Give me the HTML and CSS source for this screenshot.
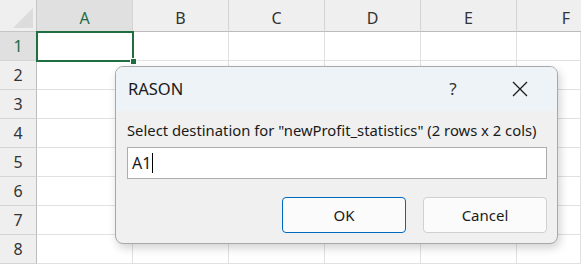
FILE: index.html
```html
<!DOCTYPE html>
<html lang="en">
  <head>
    <meta charset="UTF-8" />
    <title>RASON</title>
    <link rel="stylesheet" href="styles.css">
  </head>
  <body>
    <div class="sheet">
      <div class="corner"><span class="corner-tri"></span></div>
      <div class="col-head active">A</div>
      <div class="col-head">B</div>
      <div class="col-head">C</div>
      <div class="col-head">D</div>
      <div class="col-head">E</div>
      <div class="col-head last">F</div>

      <div class="row-head active">1</div>
      <div class="cell selected"><span class="handle"></span></div>
      <div class="cell"></div><div class="cell"></div><div class="cell"></div><div class="cell"></div><div class="cell"></div>

      <div class="row-head">2</div>
      <div class="cell"></div><div class="cell"></div><div class="cell"></div><div class="cell"></div><div class="cell"></div><div class="cell"></div>
      <div class="row-head">3</div>
      <div class="cell"></div><div class="cell"></div><div class="cell"></div><div class="cell"></div><div class="cell"></div><div class="cell"></div>
      <div class="row-head">4</div>
      <div class="cell"></div><div class="cell"></div><div class="cell"></div><div class="cell"></div><div class="cell"></div><div class="cell"></div>
      <div class="row-head">5</div>
      <div class="cell"></div><div class="cell"></div><div class="cell"></div><div class="cell"></div><div class="cell"></div><div class="cell"></div>
      <div class="row-head">6</div>
      <div class="cell"></div><div class="cell"></div><div class="cell"></div><div class="cell"></div><div class="cell"></div><div class="cell"></div>
      <div class="row-head">7</div>
      <div class="cell"></div><div class="cell"></div><div class="cell"></div><div class="cell"></div><div class="cell"></div><div class="cell"></div>
      <div class="row-head">8</div>
      <div class="cell"></div><div class="cell"></div><div class="cell"></div><div class="cell"></div><div class="cell"></div><div class="cell"></div>
    </div>

    <!-- 對話框 -->
    <div class="dialog">
      <div class="title-bar">
        <span class="title">RASON</span>
        <span class="help">?</span>
        <span class="close">
          <svg width="16" height="16" viewBox="0 0 16 16">
            <path d="M1 1 L15 15 M15 1 L1 15" stroke="#1a1a1a" stroke-width="1.3" fill="none" />
          </svg>
        </span>
      </div>
      <div class="dialog-body">
        <p class="prompt">Select destination for "newProfit_statistics" (2 rows x 2 cols)</p>
        <div class="input">A1<span class="caret"></span></div>
        <div class="buttons">
          <span class="btn primary">OK</span>
          <span class="btn">Cancel</span>
        </div>
      </div>
    </div>
  </body>
</html>
```

FILE: styles.css
```css
* {
  margin: 0;
  padding: 0;
  box-sizing: border-box;
}

body {
  width: 581px;
  height: 264px;
  overflow: hidden;
  position: relative;
  background-color: #ffffff;
  font-family: "Noto Sans", "Open Sans", Arial, sans-serif;
  color: #1a1a1a;
}

/* 試算表格線 */
.sheet {
  display: grid;
  grid-template-columns: 37px repeat(5, 96px) 1fr;
  grid-template-rows: 32px repeat(8, 29px);
  width: 581px;
}

.corner {
  position: relative;
  background-color: #efefef;
  border-right: 1px solid #c6c6c6;
  border-bottom: 1px solid #c6c6c6;
}

.corner-tri {
  position: absolute;
  right: 3px;
  bottom: 3px;
  width: 0;
  height: 0;
  border-left: 20px solid transparent;
  border-bottom: 20px solid #dcdcdc;
}

.col-head {
  display: flex;
  justify-content: center;
  align-items: center;
  padding-top: 5px;
  background-color: #efefef;
  border-right: 1px solid #d4d4d4;
  border-bottom: 1px solid #bcbcbc;
  font-size: 16px;
  color: #333333;
}

.col-head.last {
  border-right: none;
  padding-left: 34px;
}

.row-head {
  display: flex;
  justify-content: center;
  align-items: center;
  background-color: #efefef;
  border-right: 1px solid #bcbcbc;
  border-bottom: 1px solid #d4d4d4;
  font-size: 16px;
  color: #333333;
}

.col-head.active,
.row-head.active {
  background-color: #e0e0e0;
  color: #1e6b45;
}

.cell {
  border-right: 1px solid #e1e1e1;
  border-bottom: 1px solid #e1e1e1;
}

.cell.selected {
  position: relative;
  border: none;
}

.cell.selected::before {
  content: "";
  position: absolute;
  left: -1px;
  top: -1px;
  right: -1px;
  bottom: -1px;
  border: 2px solid #1e6e42;
}

.handle {
  position: absolute;
  right: -4px;
  bottom: -4px;
  width: 7px;
  height: 7px;
  background-color: #1e6e42;
  border: 1px solid #ffffff;
}

/* 對話框 */
.dialog {
  position: absolute;
  left: 115px;
  top: 66px;
  width: 443px;
  height: 178px;
  background-color: #f0f0f0;
  border: 1px solid #a8a8a8;
  border-radius: 8px;
  box-shadow: 2px 4px 10px rgba(0, 0, 0, 0.18);
  overflow: hidden;
}

.title-bar {
  display: flex;
  align-items: center;
  height: 44px;
  padding-left: 12px;
  background-color: #edf3f7;
}

.title {
  flex: 1;
  font-size: 16.5px;
  padding-bottom: 2px;
}

.help {
  width: 30px;
  font-size: 17px;
  color: #333333;
  margin-right: 44px;
  text-align: center;
  padding-bottom: 2px;
}

.close {
  display: flex;
  margin-right: 29px;
}

.dialog-body {
  padding: 9px 10px 0 11px;
}

.prompt {
  font-size: 14.8px;
  line-height: 20px;
  margin-bottom: 7px;
}

.input {
  display: flex;
  align-items: center;
  height: 32px;
  background-color: #ffffff;
  border: 1px solid #adadad;
  padding-left: 4px;
  font-size: 16px;
}

.caret {
  width: 1px;
  height: 20px;
  margin-left: 1px;
  background-color: #000000;
}

.buttons {
  display: flex;
  justify-content: flex-end;
  gap: 17px;
  margin-top: 18px;
}

.btn {
  display: flex;
  justify-content: center;
  align-items: center;
  width: 124px;
  height: 36px;
  background-color: #fbfbfb;
  border: 1px solid #d0d0d0;
  border-radius: 4px;
  font-size: 15px;
}

.btn.primary {
  border-color: #0067c0;
}
```
